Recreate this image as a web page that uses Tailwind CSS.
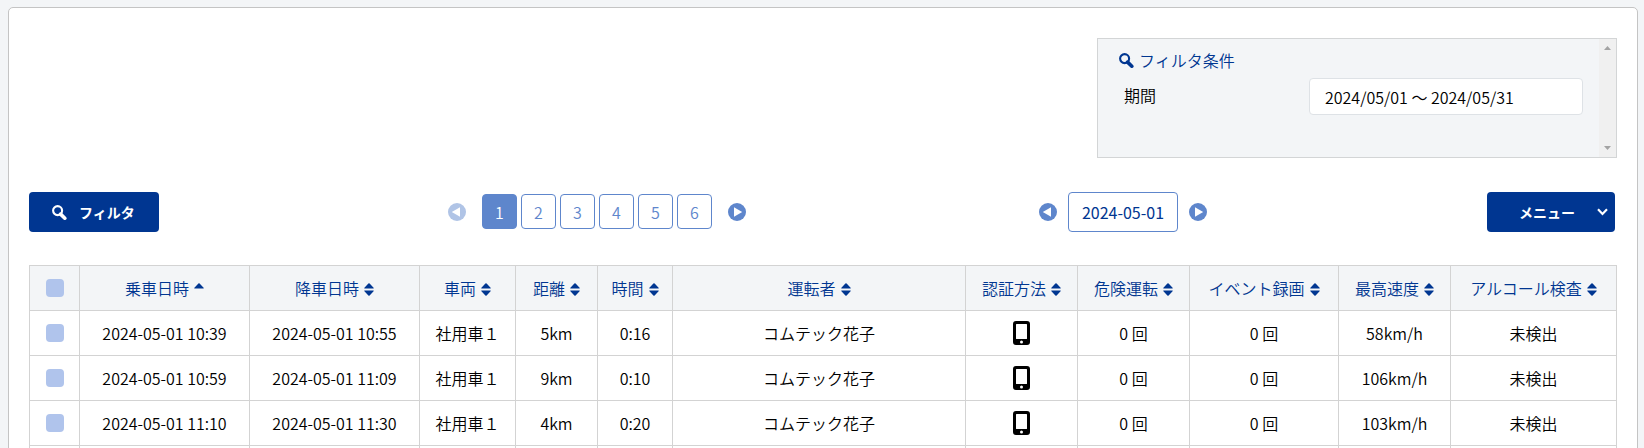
<!DOCTYPE html>
<html lang="ja" class="[scrollbar-width:none]">
<head>
    <meta charset="utf-8">
    <meta name="viewport" content="width=device-width, initial-scale=1">
    <title>運転日報</title>
    <script src="https://cdn.jsdelivr.net/npm/@tailwindcss/browser@4"></script>
</head>
<body class="bg-[#f3f5f7] pt-[7px] pl-2 pr-1.5 pb-2 text-base font-[350] text-black font-['Noto_Sans_CJK_JP',sans-serif]">

    <!-- shared icons -->
    <svg class="hidden">
        <symbol id="search" viewBox="0 0 15 15">
            <circle cx="5.6" cy="5.6" r="4.5" fill="none" stroke="currentColor" stroke-width="2.1"/>
            <path d="M8.6 9.1 12.8 13.2" fill="none" stroke="currentColor" stroke-width="3.6" stroke-linecap="round"/>
        </symbol>
        <symbol id="sort" viewBox="0 0 10 13">
            <path d="M.5 5.5Q0 5.2.4 4.7L4.4.4Q5 0 5.6.4L9.6 4.7Q10 5.2 9.5 5.5ZM.5 7.5Q0 7.8.4 8.3L4.4 12.6Q5 13 5.6 12.6L9.6 8.3Q10 7.8 9.5 7.5Z" fill="currentColor"/>
        </symbol>
        <symbol id="sort-up" viewBox="0 0 10 13">
            <path d="M.5 5.5Q0 5.2.4 4.7L4.4.4Q5 0 5.6.4L9.6 4.7Q10 5.2 9.5 5.5Z" fill="currentColor"/>
        </symbol>
        <symbol id="prev" viewBox="0 0 18 18">
            <circle cx="9" cy="9" r="9" fill="currentColor"/>
            <path d="M12 4.2v9.6L3.8 9Z" fill="#fff"/>
        </symbol>
        <symbol id="next" viewBox="0 0 18 18">
            <circle cx="9" cy="9" r="9" fill="currentColor"/>
            <path d="M6 4.2v9.6L14.2 9Z" fill="#fff"/>
        </symbol>
        <symbol id="phone" viewBox="0 0 17 24">
            <path fill-rule="evenodd" d="M3 0h11a3 3 0 0 1 3 3v18a3 3 0 0 1-3 3H3a3 3 0 0 1-3-3V3a3 3 0 0 1 3-3ZM3.6 3a.6.6 0 0 0-.6.6V17.4a.6.6 0 0 0 .6.6h9.8a.6.6 0 0 0 .6-.6V3.6a.6.6 0 0 0-.6-.6ZM8.5 19.5a1.5 1.5 0 1 0 0 3 1.500 1.500 0 0 0 0-3Z" fill="#000"/>
        </symbol>
    </svg>

    <main class="min-h-screen rounded-[5px] border border-[#c4c4c4] bg-white pl-5 pr-5 pt-[30px] pb-8">

        <section class="ml-auto flex h-[120px] w-[520px] border border-[#d3d5d6] bg-[#f3f5f7]">
            <div class="flex-1 pl-[21px] pr-4 pt-[9px]">
                <h2 class="flex items-center gap-[5px] leading-6 font-[350] text-[#003691]">
                    <svg class="size-[15px]"><use href="#search"/></svg>フィルタ条件
                </h2>
                <div class="mt-1.5 flex items-start justify-between pl-[5px]">
                    <label for="period" class="leading-[34px]">期間</label>
                    <input id="period" type="text" readonly value="2024/05/01 ～ 2024/05/31"
                           class="h-[37px] w-[274px] rounded border border-[#dee2e6] bg-white px-[15px]">
                </div>
            </div>
            <div class="flex w-[17px] flex-col items-center justify-between bg-[#f0f0f0] py-[7px] text-[#a3a3a3]">
                <svg class="h-1 w-[7px]" viewBox="0 0 7 4"><path d="M3.5 0 7 4H0Z" fill="currentColor"/></svg>
                <svg class="h-1 w-[7px]" viewBox="0 0 7 4"><path d="M3.5 4 0 0H7Z" fill="currentColor"/></svg>
            </div>
        </section>

        <div class="mt-[34px] grid grid-cols-[305fr_526fr_526fr_231fr] items-center">
            <button type="button" class="flex h-10 w-[130px] items-center gap-3 rounded bg-[#003691] pl-[23px] text-sm font-bold text-white">
                <svg class="size-[15px]"><use href="#search"/></svg>フィルタ
            </button>

            <nav class="flex items-center justify-center gap-4 pb-px text-[#5e86cc]" aria-label="ページ">
                <button type="button" disabled aria-label="前のページ" class="text-[#b0c4e6]"><svg class="size-[18px]"><use href="#prev"/></svg></button>
                <div class="flex gap-1">
                    <a href="#1" class="flex size-[35px] items-center justify-center rounded border border-[#5e86cc] bg-[#5e86cc] text-white">1</a>
                    <a href="#2" class="flex size-[35px] items-center justify-center rounded border border-[#5e86cc]">2</a>
                    <a href="#3" class="flex size-[35px] items-center justify-center rounded border border-[#5e86cc]">3</a>
                    <a href="#4" class="flex size-[35px] items-center justify-center rounded border border-[#5e86cc]">4</a>
                    <a href="#5" class="flex size-[35px] items-center justify-center rounded border border-[#5e86cc]">5</a>
                    <a href="#6" class="flex size-[35px] items-center justify-center rounded border border-[#5e86cc]">6</a>
                </div>
                <button type="button" aria-label="次のページ"><svg class="size-[18px]"><use href="#next"/></svg></button>
            </nav>

            <div class="flex items-center justify-center gap-[11px] text-[#5e86cc]">
                <button type="button" aria-label="前日"><svg class="size-[18px]"><use href="#prev"/></svg></button>
                <input type="text" value="2024-05-01" aria-label="日付"
                       class="h-10 w-[110px] rounded border border-[#5e86cc] bg-white text-center font-normal text-[#003691]">
                <button type="button" aria-label="翌日"><svg class="size-[18px]"><use href="#next"/></svg></button>
            </div>

            <button type="button" class="mr-0.5 flex h-10 w-32 items-center justify-between justify-self-end rounded bg-[#003691] pl-8 pr-[7px] text-sm font-bold text-white">
                メニュー
                <svg class="h-2 w-[11px]" viewBox="0 0 11 8" fill="none" stroke="currentColor" stroke-width="2.2"><path d="M1 1.3 5.5 5.9 10 1.3"/></svg>
            </button>
        </div>

        <table class="mt-[33px] w-full table-fixed border-collapse text-center whitespace-nowrap [&_td]:border [&_td]:border-[#d3d3d3] [&_th]:border [&_th]:border-[#d3d3d3] [&_th]:font-[350] [&_tr]:h-[45px]">
            <colgroup>
                <col class="w-[50px]"><col class="w-[170px]"><col class="w-[170px]"><col class="w-24">
                <col class="w-[82px]"><col class="w-[75px]"><col><col class="w-28">
                <col class="w-28"><col class="w-[149px]"><col class="w-28"><col class="w-[166px]">
            </colgroup>
            <thead class="bg-[#f3f5f7] text-[#003691] [&_svg]:ml-[5px] [&_svg]:inline-block [&_svg]:h-[13px] [&_svg]:w-2.5 [&_svg]:align-[-1px]">
                <tr>
                    <th><input type="checkbox" aria-label="すべて選択" class="block mx-auto size-[18px] appearance-none rounded bg-[#b0c4ec]"></th>
                    <th>乗車日時<svg><use href="#sort-up"/></svg></th>
                    <th>降車日時<svg><use href="#sort"/></svg></th>
                    <th>車両<svg><use href="#sort"/></svg></th>
                    <th>距離<svg><use href="#sort"/></svg></th>
                    <th>時間<svg><use href="#sort"/></svg></th>
                    <th>運転者<svg><use href="#sort"/></svg></th>
                    <th>認証方法<svg><use href="#sort"/></svg></th>
                    <th>危険運転<svg><use href="#sort"/></svg></th>
                    <th>イベント録画<svg><use href="#sort"/></svg></th>
                    <th>最高速度<svg><use href="#sort"/></svg></th>
                    <th>アルコール検査<svg><use href="#sort"/></svg></th>
                </tr>
            </thead>
            <tbody>
                <tr>
                    <td><input type="checkbox" aria-label="選択" class="block mx-auto size-[18px] appearance-none rounded bg-[#b0c4ec]"></td>
                    <td>2024-05-01 10:39</td>
                    <td>2024-05-01 10:55</td>
                    <td>社用車１</td>
                    <td>5km</td>
                    <td>0:16</td>
                    <td>コムテック花子</td>
                    <td><svg class="mx-auto h-6 w-[17px]"><use href="#phone"/></svg></td>
                    <td>0 回</td>
                    <td>0 回</td>
                    <td>58km/h</td>
                    <td>未検出</td>
                </tr>
                <tr>
                    <td><input type="checkbox" aria-label="選択" class="block mx-auto size-[18px] appearance-none rounded bg-[#b0c4ec]"></td>
                    <td>2024-05-01 10:59</td>
                    <td>2024-05-01 11:09</td>
                    <td>社用車１</td>
                    <td>9km</td>
                    <td>0:10</td>
                    <td>コムテック花子</td>
                    <td><svg class="mx-auto h-6 w-[17px]"><use href="#phone"/></svg></td>
                    <td>0 回</td>
                    <td>0 回</td>
                    <td>106km/h</td>
                    <td>未検出</td>
                </tr>
                <tr>
                    <td><input type="checkbox" aria-label="選択" class="block mx-auto size-[18px] appearance-none rounded bg-[#b0c4ec]"></td>
                    <td>2024-05-01 11:10</td>
                    <td>2024-05-01 11:30</td>
                    <td>社用車１</td>
                    <td>4km</td>
                    <td>0:20</td>
                    <td>コムテック花子</td>
                    <td><svg class="mx-auto h-6 w-[17px]"><use href="#phone"/></svg></td>
                    <td>0 回</td>
                    <td>0 回</td>
                    <td>103km/h</td>
                    <td>未検出</td>
                </tr>
                <tr>
                    <td></td><td></td><td></td><td></td><td></td><td></td>
                    <td></td><td></td><td></td><td></td><td></td><td></td>
                </tr>
            </tbody>
        </table>
    </main>

</body>
</html>
